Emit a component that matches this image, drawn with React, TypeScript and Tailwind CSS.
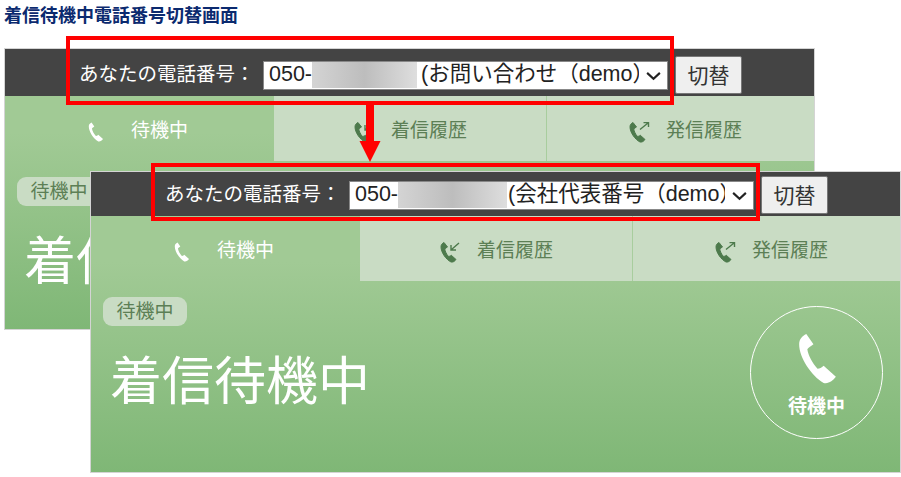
const font = { fontFamily: '"Liberation Sans", "Noto Sans CJK JP", sans-serif' };

function Handset({ className }: { className?: string }) {
  return (
    <svg viewBox="0 0 38 50" className={className} fill="currentColor">
      <path d="M9 1C5 3 2 6 2 11C2 24 14 42 26 49C31 50 35 47 38 43L26 32C24 34 22 35 20 35C15 30 11 22 10 16C11 14 14 13 16 11Z" />
    </svg>
  );
}

function HistoryIcon({ out }: { out?: boolean }) {
  return (
    <svg viewBox="0 0 24 24" className="h-[24px] w-[24px] text-[#4d7a4c]" fill="none">
      <path d="M6 2.500C4.500 3.300 3 4.600 3 6.800C3 12.500 8 19.500 13 22C15 22.500 16.800 21.200 18 19.500L13.200 15.200C12.200 16.200 11.200 16.500 10.200 16.300C8.500 14.200 7 11.200 6.800 9C7.300 8.200 8.500 7.700 9.500 7Z" fill="currentColor" stroke="currentColor" />
      {out ? (
        <path d="M13 9.500L21 3M16.500 2.600H21.500V7" stroke="currentColor" strokeWidth="1.400" />
      ) : (
        <path d="M21 3L13.500 9.500M13 5V10H18" stroke="currentColor" strokeWidth="1.400" />
      )}
    </svg>
  );
}

type WindowProps = {
  className: string;
  headerClass: string;
  numberClass: string;
  label: string;
};

function PhoneWindow({ className, headerClass, numberClass, label }: WindowProps) {
  return (
    <div className={`absolute flex w-[811px] flex-col overflow-hidden border border-[#d4d4d4] bg-gradient-to-b from-[#a1ca95] from-30% to-[#7fb776] ${className}`}>
      {/* Number switch */}
      <div className={`flex shrink-0 items-center bg-[#444444] pl-[74px] ${headerClass}`}>
        <span className="w-[184px] text-[19.500px] leading-none whitespace-nowrap text-white">あなたの電話番号：</span>
        <div className="flex h-[29px] w-[405px] items-center border border-[#888888] bg-white pl-[5px]">
          <div className="flex min-w-0 flex-1 items-center overflow-hidden text-[21.500px] leading-none whitespace-nowrap text-[#222222]">
            <span>050-</span>
            <span className={`h-[26px] shrink-0 bg-gradient-to-r from-[#d4d4d4] via-[#bdbdbd] to-[#dedede] ${numberClass}`} />
            <span className="ml-[1px]">{label}</span>
          </div>
          <svg viewBox="0 0 16 16" className="mr-[5px] ml-[6px] h-[17px] w-[17px] shrink-0 text-[#222222]" fill="none">
            <path d="M2 5.500L8 11L14 5.500" stroke="currentColor" strokeWidth="2" />
          </svg>
        </div>
        <button className="ml-[7px] flex h-[38px] w-[67px] items-center justify-center rounded-[2px] border border-[#777777] bg-[#efefef] text-[21px] leading-none text-[#333333]">
          切替
        </button>
      </div>

      {/* Tabs */}
      <div className="grid h-[65px] shrink-0 grid-cols-[269px_272px_1fr]">
        <div className="flex items-center pt-[6px] pl-[83px] text-[19px] text-white">
          <Handset className="h-[20px] w-[15px]" />
          <span className="ml-[28px]">待機中</span>
        </div>
        <div className="flex items-center bg-[#c9dcc4] pt-[6px] pl-[78px] text-[19px] text-[#5c7f55]">
          <HistoryIcon />
          <span className="ml-[15px]">着信履歴</span>
        </div>
        <div className="flex items-center border-l border-[#a8cd9e] bg-[#c9dcc4] pt-[6px] pl-[80px] text-[19px] text-[#5c7f55]">
          <HistoryIcon out />
          <span className="ml-[15px]">発信履歴</span>
        </div>
      </div>

      {/* Status */}
      <div className="relative h-[191px] shrink-0 pt-[16px] pl-[12px]">
        <span className="flex h-[29px] w-[84px] items-center justify-center rounded-[9px] bg-[#c9dcc4] text-[19px] leading-none text-[#5c7f55]">
          待機中
        </span>
        <div className="mt-[21px] ml-[7px] text-[52px] leading-[70px] text-white">着信待機中</div>
        <div className="absolute top-[25px] right-[17px] flex h-[133px] w-[133px] flex-col items-center rounded-full border border-white pt-[26px] text-white">
          <Handset className="h-[51px] w-[39px]" />
          <span className="mt-[10px] text-[19px] leading-[26px] font-bold">待機中</span>
        </div>
      </div>
    </div>
  );
}

export default function App() {
  return (
    <div className="relative h-[477px] w-[901px] overflow-hidden bg-white" style={font}>
      <h1 className="pt-[3px] pl-[4px] text-[18px] leading-[26px] font-bold text-[#0b2a6f]">着信待機中電話番号切替画面</h1>

      <PhoneWindow
        className="top-[48px] left-[4px] h-[282px]"
        headerClass="h-[47px] pt-[5px]"
        numberClass="mr-[3px] w-[105px]"
        label="(お問い合わせ（demo）"
      />

      {/* Callout from the first number to the second */}
      <div className="absolute top-[36px] left-[66px] h-[69px] w-[608px] border-4 border-[#ff0000]" />
      <svg viewBox="0 0 22 57" className="absolute top-[105px] left-[359px] h-[57px] w-[22px]">
        <path d="M7 0H15V36H21.500L11 57L0.500 36H7Z" fill="#ff0000" />
      </svg>

      <PhoneWindow
        className="top-[171px] left-[90px] h-[302px]"
        headerClass="h-[44px] pt-[2px]"
        numberClass="w-[109px]"
        label="(会社代表番号（demo）"
      />
      <div className="absolute top-[163px] left-[151px] h-[58px] w-[609px] border-4 border-[#ff0000]" />
    </div>
  );
}
